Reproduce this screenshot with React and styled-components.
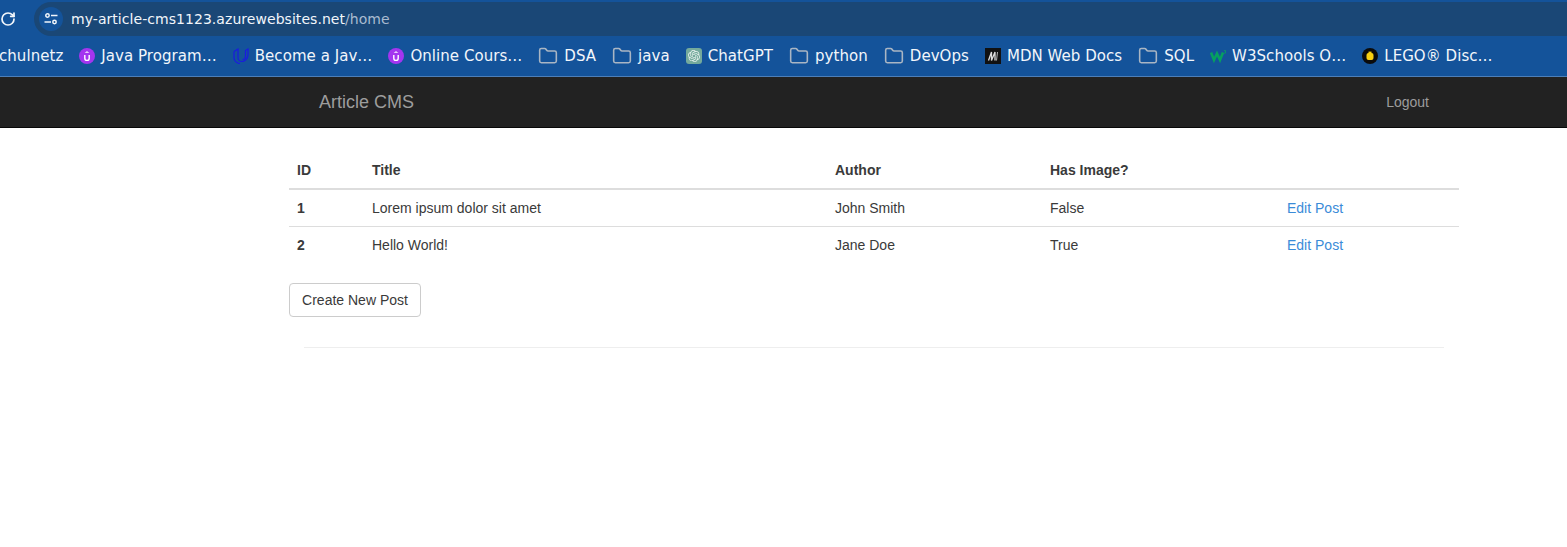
import React from "react";
import styled, { createGlobalStyle } from "styled-components";
import { Folder, RotateCw } from "lucide-react";
import { SiOpenai } from "react-icons/si";

const GlobalStyle = createGlobalStyle`
  * {
    box-sizing: border-box;
  }
  html, body {
    margin: 0;
    background: #fff;
    overflow: hidden;
  }
  body {
    font-family: "Liberation Sans", Arial, sans-serif;
    font-size: 14px;
    line-height: 20px;
    color: #3a3a3a;
  }
`;

const Chrome = styled.div`
  background: #14539a;
  border-bottom: 1px solid #4d7fb8;
  height: 77px;
  font-family: "DejaVu Sans", sans-serif;
  color: #f2f6fb;
`;

const UrlRow = styled.div`
  height: 36px;
  display: flex;
  align-items: center;
  padding-top: 2px;
`;

const Reload = styled(RotateCw)`
  flex: none;
  width: 16px;
  height: 16px;
  margin-right: 18px;
  color: #f2f6fb;
  stroke-width: 2.6;
`;

const Omnibox = styled.div`
  flex: 1;
  height: 34px;
  display: flex;
  align-items: center;
  gap: 8px;
  padding-left: 5px;
  border-radius: 17px 0 0 17px;
  background: #1a4776;
`;

const SiteBadge = styled.span`
  width: 24px;
  height: 24px;
  border-radius: 50%;
  background: #14539a;
  display: flex;
  align-items: center;
  justify-content: center;
`;

const Url = styled.span`
  font-size: 14px;
  line-height: 20px;
  letter-spacing: 0.05px;
  color: #f2f6fb;
`;

const UrlPath = styled.span`
  color: #a9bbd0;
`;

const BookmarkBar = styled.div`
  height: 40px;
  margin-left: -1px;
  display: flex;
  align-items: center;
  gap: 16px;
  white-space: nowrap;
`;

const Bookmark = styled.span`
  display: flex;
  align-items: center;
  gap: 6px;
  font-size: 15px;
  line-height: 20px;
  letter-spacing: 0.05px;
`;

const FolderIcon = styled(Folder)`
  flex: none;
  width: 20px;
  height: 20px;
  color: #aab6c4;
  stroke-width: 1.9;
`;

const Favicon = styled.svg`
  flex: none;
  width: 16px;
  height: 16px;
`;

const GptBadge = styled.span`
  flex: none;
  width: 16px;
  height: 16px;
  border-radius: 3px;
  background: #74aa9c;
  color: #e8f2ef;
  font-size: 12px;
  display: flex;
  align-items: center;
  justify-content: center;
`;

const Navbar = styled.nav`
  height: 51px;
  background: #222;
  border-bottom: 1px solid #080808;
  display: flex;
  align-items: center;
  justify-content: space-between;
  padding: 0 138px 0 319px;
  color: #9d9d9d;
`;

const Brand = styled.a`
  font-size: 18px;
  line-height: 20px;
`;

const NavLink = styled.a`
  font-size: 14px;
  line-height: 20px;
`;

const Container = styled.main`
  width: 1170px;
  margin-left: 289px;
  padding-top: 24px;
`;

const Row = styled.div`
  display: grid;
  grid-template-columns: 75px 463px 215px 237px 180px;
  border-top: ${(p) => (p.$divided ? "1px solid #ddd" : "none")};
  border-bottom: ${(p) => (p.$head ? "2px solid #ddd" : "none")};
  font-weight: ${(p) => (p.$head ? 700 : 400)};
`;

const Cell = styled.div`
  padding: 8px;
  font-weight: ${(p) => (p.$bold ? 700 : "inherit")};
`;

const EditLink = styled.a`
  color: #3a8bd8;
`;

const Button = styled.button`
  display: block;
  margin-top: 20px;
  width: 132px;
  height: 34px;
  padding: 6px 12px;
  font: inherit;
  color: #3a3a3a;
  background: #fff;
  border: 1px solid #ccc;
  border-radius: 4px;
`;

const Rule = styled.hr`
  margin: 30px 15px 0;
  border: 0;
  border-top: 1px solid #eee;
`;

const Tune = () => (
  <Favicon viewBox="0 0 16 16" fill="none" stroke="#f2f6fb" strokeWidth="1.5">
    <circle cx="4.5" cy="4.5" r="1.7" />
    <path d="M8 4.500h6.500" />
    <circle cx="11.5" cy="11" r="1.7" />
    <path d="M1.500 11H8" />
  </Favicon>
);

const UdemyIcon = () => (
  <Favicon viewBox="0 0 16 16">
    <circle cx="8" cy="8" r="8" fill="#a435f0" />
    <path d="M5.800 7v3.200a2.200 2.200 0 0 0 4.400 0V7" fill="none" stroke="#fff" strokeWidth="1.4" />
    <path d="M8 3.200 10.400 4.800H5.600z" fill="#fff" />
  </Favicon>
);

const UdacityIcon = () => (
  <Favicon viewBox="0 0 16 16" fill="none" stroke="#1a1ae0" strokeWidth="1.2">
    <path d="M1 3.500 5 1v9c0 2 2 3.500 4 3.500S15 11 15 7V1l-2.500 1.500V8c0 2-1 3.500-3 3.500" />
    <path d="M1 3.500V10c0 3 3 5.500 6 5.500" />
  </Favicon>
);

const MdnIcon = () => (
  <Favicon viewBox="0 0 16 16">
    <rect width="16" height="16" fill="#111" />
    <path d="M3.500 12.500 6.500 4v8.500L10 4v8.500" fill="none" stroke="#ddd" strokeWidth="1.300" />
    <path d="M12.500 4 11.500 12.500" fill="none" stroke="#ddd" strokeWidth=".8" />
  </Favicon>
);

const W3Icon = () => (
  <Favicon viewBox="0 0 16 16" fill="none" stroke="#06a060">
    <path d="M1 4.500 4 12l3-6.500L10 12l3-7.500" strokeWidth="2.600" />
    <path d="M14 2.500h1.500v2.600H14" strokeWidth=".8" />
  </Favicon>
);

const LegoIcon = () => (
  <Favicon viewBox="0 0 16 16">
    <circle cx="8" cy="8" r="8" fill="#0b0b0b" />
    <rect x="4.500" y="5" width="7" height="7" rx="2" fill="#f6cf12" />
    <rect x="6.500" y="3.600" width="3" height="2" fill="#f6cf12" />
  </Favicon>
);

const bookmarks = [
  { label: "chulnetz" },
  { label: "Java Program…", icon: <UdemyIcon /> },
  { label: "Become a Jav…", icon: <UdacityIcon /> },
  { label: "Online Cours…", icon: <UdemyIcon /> },
  { label: "DSA", icon: <FolderIcon /> },
  { label: "java", icon: <FolderIcon /> },
  { label: "ChatGPT", icon: <GptBadge><SiOpenai /></GptBadge> },
  { label: "python", icon: <FolderIcon /> },
  { label: "DevOps", icon: <FolderIcon /> },
  { label: "MDN Web Docs", icon: <MdnIcon /> },
  { label: "SQL", icon: <FolderIcon /> },
  { label: "W3Schools O…", icon: <W3Icon /> },
  { label: "LEGO® Disc…", icon: <LegoIcon /> },
];

const posts = [
  { id: 1, title: "Lorem ipsum dolor sit amet", author: "John Smith", image: "False" },
  { id: 2, title: "Hello World!", author: "Jane Doe", image: "True" },
];

export default function App() {
  return (
    <>
      <GlobalStyle />
      <Chrome>
        <UrlRow>
          <Reload />
          <Omnibox>
            <SiteBadge>
              <Tune />
            </SiteBadge>
            <Url>
              my-article-cms1123.azurewebsites.net<UrlPath>/home</UrlPath>
            </Url>
          </Omnibox>
        </UrlRow>
        <BookmarkBar>
          {bookmarks.map((b) => (
            <Bookmark key={b.label}>
              {b.icon}
              {b.label}
            </Bookmark>
          ))}
        </BookmarkBar>
      </Chrome>
      <Navbar>
        <Brand>Article CMS</Brand>
        <NavLink>Logout</NavLink>
      </Navbar>
      <Container>
        <Row $head>
          <Cell>ID</Cell>
          <Cell>Title</Cell>
          <Cell>Author</Cell>
          <Cell>Has Image?</Cell>
          <Cell />
        </Row>
        {posts.map((post, i) => (
          <Row key={post.id} $divided={i > 0}>
            <Cell $bold>{post.id}</Cell>
            <Cell>{post.title}</Cell>
            <Cell>{post.author}</Cell>
            <Cell>{post.image}</Cell>
            <Cell>
              <EditLink>Edit Post</EditLink>
            </Cell>
          </Row>
        ))}
        <Button>Create New Post</Button>
        <Rule />
      </Container>
    </>
  );
}
